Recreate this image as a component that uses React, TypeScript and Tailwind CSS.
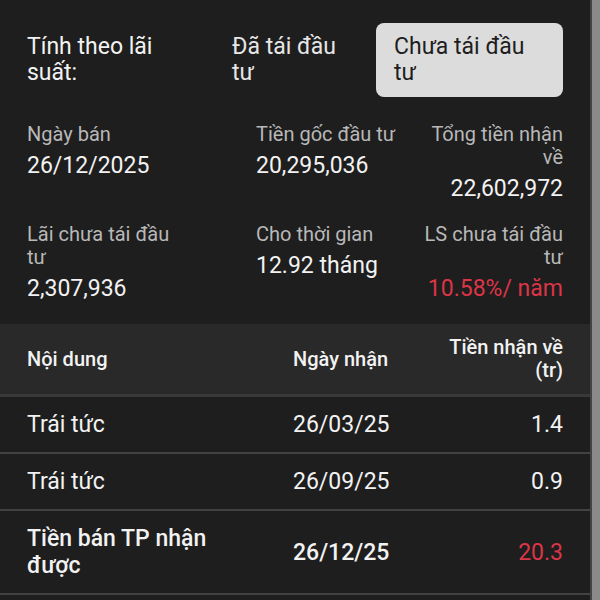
const STATS = [
  [
    { label: "Ngày bán", value: "26/12/2025" },
    { label: "Tiền gốc đầu tư", value: "20,295,036" },
    { label: "Tổng tiền nhận về", value: "22,602,972" },
  ],
  [
    { label: "Lãi chưa tái đầu tư", value: "2,307,936" },
    { label: "Cho thời gian", value: "12.92 tháng" },
    { label: "LS chưa tái đầu tư", value: "10.58%/ năm", red: true },
  ],
];

const ROWS = [
  { name: "Trái tức", date: "26/03/25", amount: "1.4" },
  { name: "Trái tức", date: "26/09/25", amount: "0.9" },
  { name: "Tiền bán TP nhận được", date: "26/12/25", amount: "20.3", total: true },
];

export default function App() {
  return (
    <div
      className="flex h-[600px] w-[600px] overflow-hidden bg-[#1e1e1e] text-[#f2f2f2]"
      style={{ fontFamily: "Roboto, 'Noto Sans', sans-serif" }}
    >
      <main className="flex-1">
        {/* Interest mode toggle */}
        <div className="flex items-center px-[27px] pt-[23px] text-[23px] leading-[26px]">
          <div className="w-[187px] pr-[40px]">Tính theo lãi suất:</div>
          <button className="w-[148px] px-[18px] py-[11px] text-left text-[#e6e6e6]">
            Đã tái đầu tư
          </button>
          <button className="ml-[14px] w-[187px] rounded-[8px] bg-[#dcdcdc] px-[18px] py-[11px] text-left text-[#1e1e1e]">
            Chưa tái đầu tư
          </button>
        </div>

        {/* Summary */}
        <div className="mt-[26px] flex flex-col gap-[20px] px-[27px]">
          {STATS.map((row, i) => (
            <div key={i} className="flex items-start">
              {row.map((item, j) => (
                <div
                  key={item.label}
                  className={
                    j === 0
                      ? "w-[229px] pr-[80px]"
                      : j === 1
                        ? "flex-1"
                        : "w-[145px] text-right"
                  }
                >
                  <div className="text-[20px] leading-[23px] text-[#b8b8b8]">{item.label}</div>
                  <div
                    className={
                      "mt-[6px] text-[23px] leading-[28px] " +
                      (item.red ? "text-[#dc3547]" : "text-[#f2f2f2]")
                    }
                  >
                    {item.value}
                  </div>
                </div>
              ))}
            </div>
          ))}
        </div>

        {/* Cash flow table */}
        <div className="mt-[21px]">
          <div className="flex h-[73px] items-center border-b-[3px] border-[#393939] bg-[#292929] px-[27px] text-[20px] font-medium leading-[23px]">
            <div className="w-[266px]">Nội dung</div>
            <div className="flex-1">Ngày nhận</div>
            <div className="w-[130px] text-right">Tiền nhận về (tr)</div>
          </div>
          {ROWS.map((r) => (
            <div
              key={r.date}
              className={
                "flex items-center border-b-2 border-[#424242] px-[27px] py-[14px] text-[23px] leading-[27px] " +
                (r.total ? "font-medium" : "")
              }
            >
              <div className="w-[266px]">
                <div className="max-w-[215px]">{r.name}</div>
              </div>
              <div className="flex-1">{r.date}</div>
              <div
                className={
                  "w-[130px] text-right " + (r.total ? "font-normal text-[#dc3547]" : "")
                }
              >
                {r.amount}
              </div>
            </div>
          ))}
        </div>
      </main>
      <aside className="w-[10px] border-l-2 border-[#444] bg-[#8a8a8a]" />
    </div>
  );
}
